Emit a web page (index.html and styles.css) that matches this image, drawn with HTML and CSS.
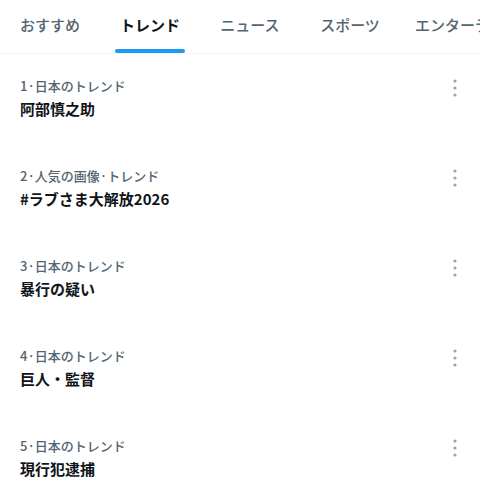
FILE: index.html
```html
<!DOCTYPE html>
<html lang="ja">
<head>
<meta charset="utf-8">
<link rel="stylesheet" href="styles.css">
</head>
<body>
<div class="page">
  <nav class="tabs">
    <div class="tab"><span class="tab-label">おすすめ</span></div>
    <div class="tab active"><span class="tab-label">トレンド</span><span class="bar"></span></div>
    <div class="tab"><span class="tab-label">ニュース</span></div>
    <div class="tab"><span class="tab-label">スポーツ</span></div>
    <div class="tab tab-last"><span class="tab-label">エンターテインメント</span></div>
  </nav>
  <div class="list">
    <div class="trend">
      <div class="meta">1·日本のトレンド</div>
      <div class="title">阿部慎之助</div>
      <div class="more"><svg viewBox="0 0 6 18" width="6" height="18"><circle cx="3" cy="2" r="1.6"/><circle cx="3" cy="9" r="1.6"/><circle cx="3" cy="16" r="1.6"/></svg></div>
    </div>
    <div class="trend">
      <div class="meta">2·人気の画像·トレンド</div>
      <div class="title">#ラブさま大解放2026</div>
      <div class="more"><svg viewBox="0 0 6 18" width="6" height="18"><circle cx="3" cy="2" r="1.6"/><circle cx="3" cy="9" r="1.6"/><circle cx="3" cy="16" r="1.6"/></svg></div>
    </div>
    <div class="trend">
      <div class="meta">3·日本のトレンド</div>
      <div class="title">暴行の疑い</div>
      <div class="more"><svg viewBox="0 0 6 18" width="6" height="18"><circle cx="3" cy="2" r="1.6"/><circle cx="3" cy="9" r="1.6"/><circle cx="3" cy="16" r="1.6"/></svg></div>
    </div>
    <div class="trend">
      <div class="meta">4·日本のトレンド</div>
      <div class="title">巨人・監督</div>
      <div class="more"><svg viewBox="0 0 6 18" width="6" height="18"><circle cx="3" cy="2" r="1.6"/><circle cx="3" cy="9" r="1.6"/><circle cx="3" cy="16" r="1.6"/></svg></div>
    </div>
    <div class="trend">
      <div class="meta">5·日本のトレンド</div>
      <div class="title">現行犯逮捕</div>
      <div class="more"><svg viewBox="0 0 6 18" width="6" height="18"><circle cx="3" cy="2" r="1.6"/><circle cx="3" cy="9" r="1.6"/><circle cx="3" cy="16" r="1.6"/></svg></div>
    </div>
  </div>
</div>
</body>
</html>
```
FILE: styles.css
```css
html, body {
  margin: 0;
  padding: 0;
  background: #ffffff;
}
body {
  font-family: "Noto Sans CJK JP", "Noto Sans", sans-serif;
  color: #0f1419;
  width: 480px;
  height: 495px;
  overflow: hidden;
}
.page {
  width: 480px;
}
.tabs {
  display: flex;
  height: 53px;
  border-bottom: 1px solid #eff3f4;
  overflow: hidden;
  white-space: nowrap;
}
.tab {
  position: relative;
  flex: 0 0 100px;
  display: flex;
  justify-content: center;
  align-items: center;
  padding-bottom: 4px;
  box-sizing: border-box;
  font-size: 15px;
  font-weight: 500;
  color: #536471;
}
.tab-last {
  flex: 0 0 auto;
  justify-content: flex-start;
  padding-left: 15px;
}
.tab.active {
  color: #0f1419;
  font-weight: 700;
}
.bar {
  position: absolute;
  left: 15px;
  bottom: 0;
  width: 70px;
  height: 4px;
  border-radius: 2px;
  background: #1d9bf0;
}
.list {
  display: flex;
  flex-direction: column;
}
.trend {
  position: relative;
  height: 90px;
  box-sizing: border-box;
  padding: 24px 20px 0 20px;
}
.meta {
  font-size: 13px;
  line-height: 16px;
  color: #536471;
  font-weight: 500;
}
.title {
  margin-top: 5px;
  font-size: 15px;
  line-height: 20px;
  font-weight: 700;
  color: #0f1419;
}
.more {
  position: absolute;
  right: 22px;
  top: 25px;
  width: 6px;
  height: 18px;
  fill: #9aa5ae;
}
.more svg {
  display: block;
}
```
